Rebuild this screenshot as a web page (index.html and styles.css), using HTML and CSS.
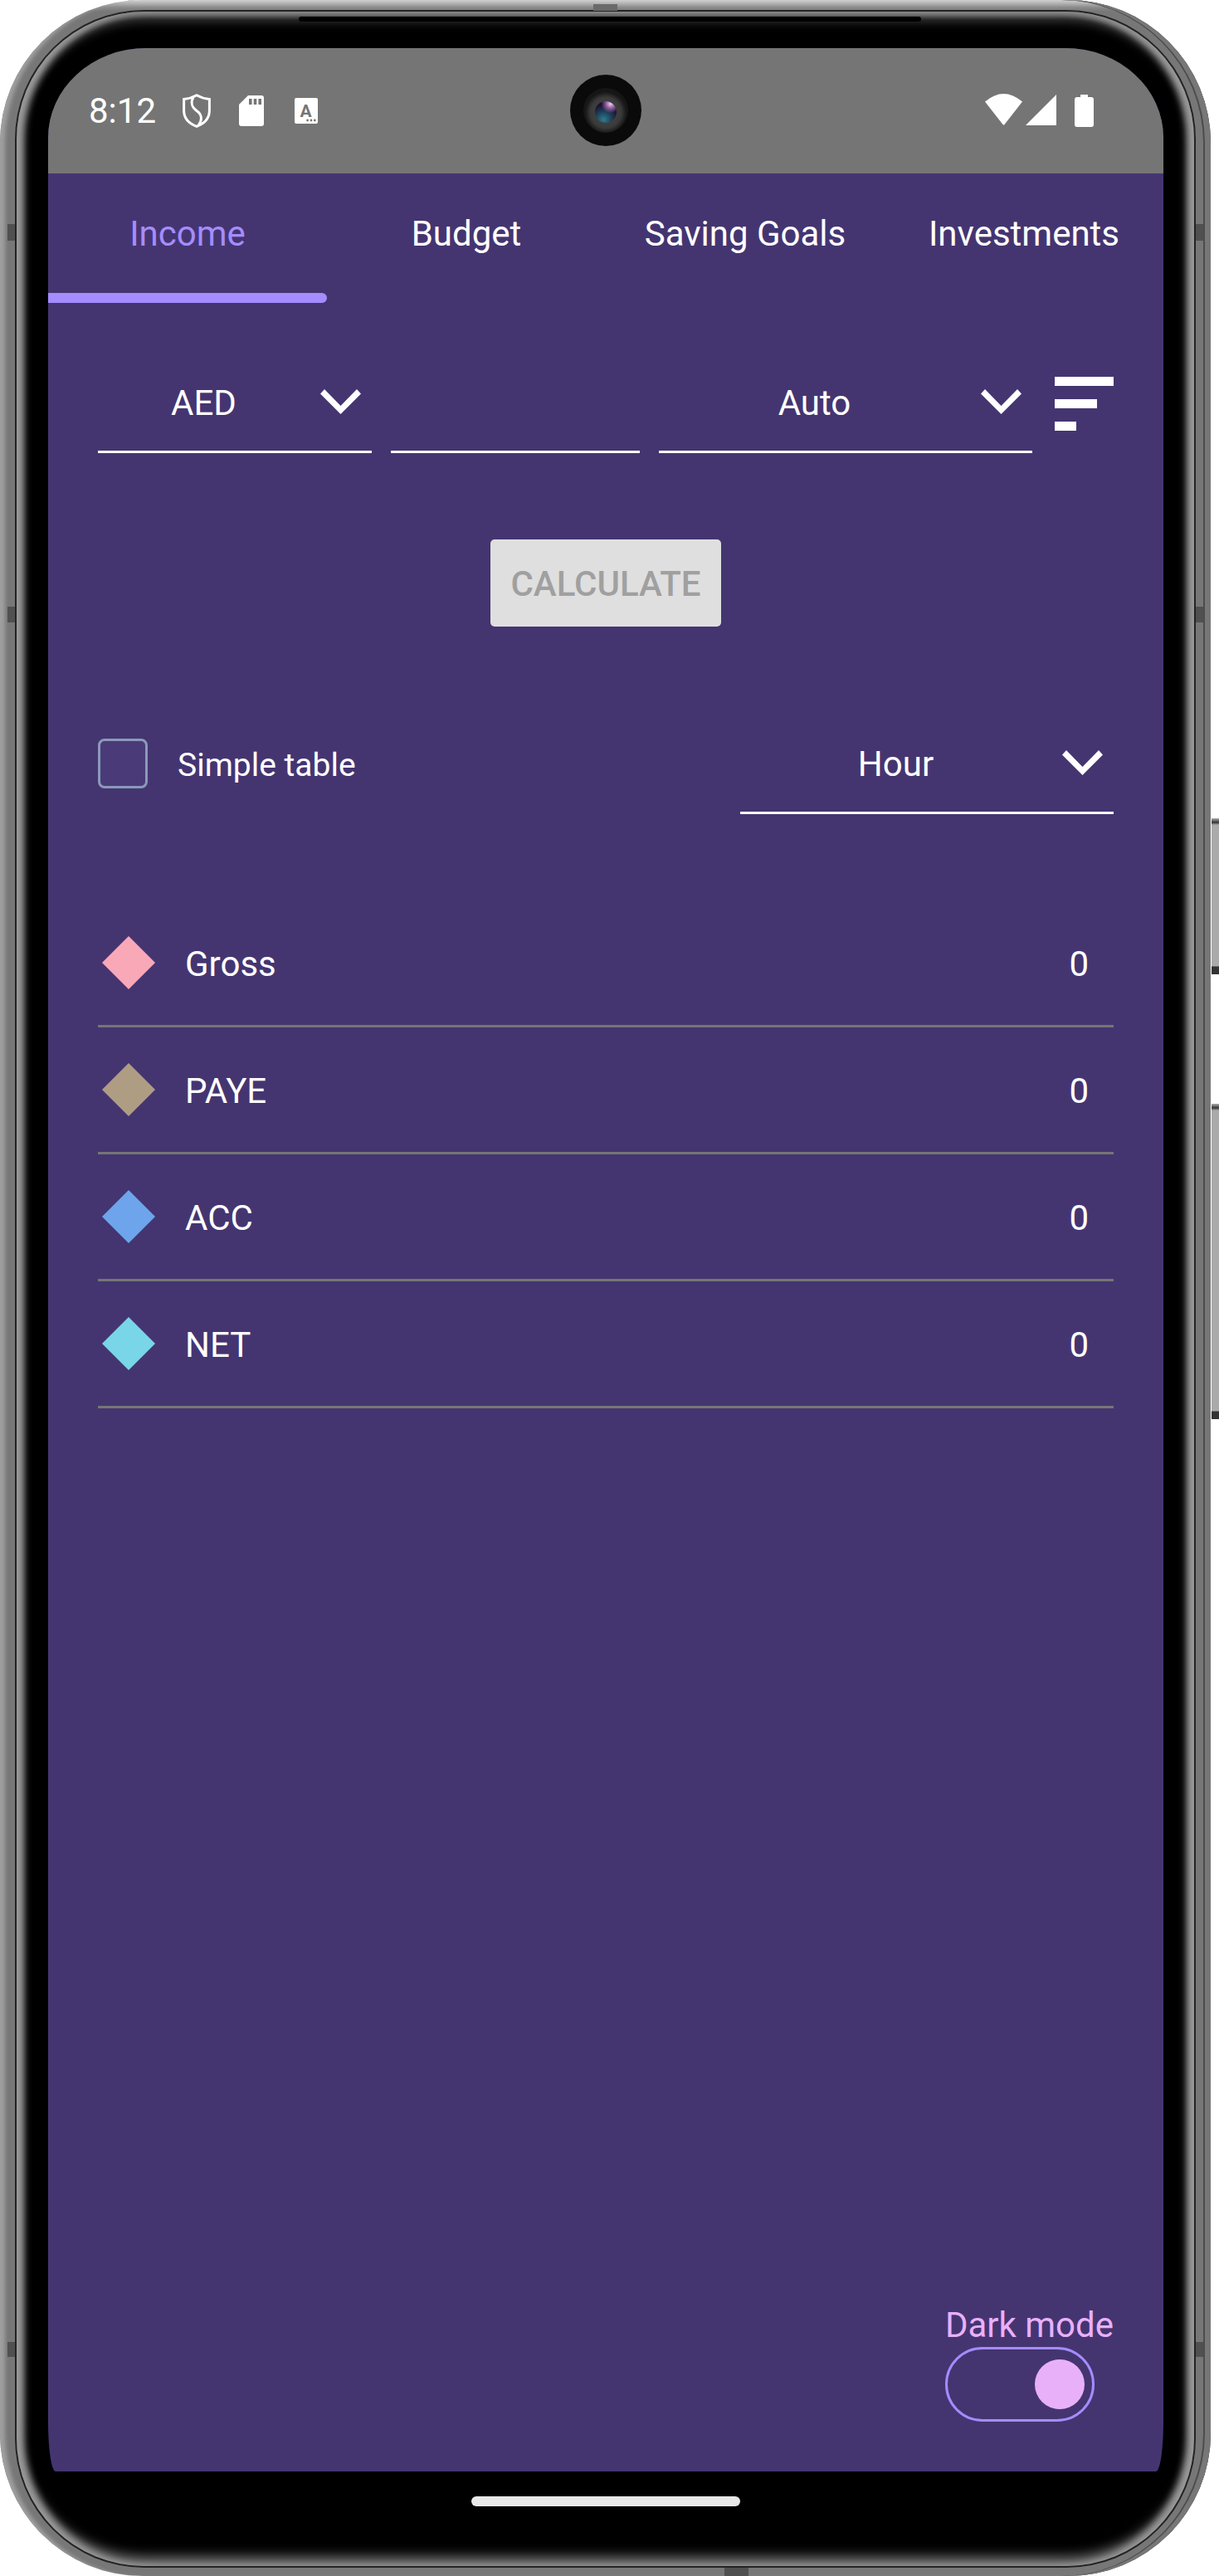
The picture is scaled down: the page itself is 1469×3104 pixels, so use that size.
FILE: index.html
```html
<!DOCTYPE html>
<html lang="en">
<head>
<meta charset="utf-8">
<title>Income</title>
<link rel="stylesheet" href="styles.css">
</head>
<body>
<div class="device">
  <span class="side-btn side-btn-a"></span>
  <span class="side-btn side-btn-b"></span>
  <span class="tick tick-l1"></span><span class="tick tick-l2"></span><span class="tick tick-l3"></span>
  <span class="tick tick-r1"></span><span class="tick tick-r2"></span><span class="tick tick-r3"></span>
  <span class="tick tick-top"></span><span class="tick tick-bottom"></span>
  <span class="notch"></span>
  <div class="shell">
    <div class="rim">
      <div class="bezel">
        <main class="screen">
          <header class="status">
            <div class="status-left">
              <span class="time">8:12</span>
              <svg class="ic-shield" viewBox="0 0 34 41" aria-hidden="true"><path class="stroke" d="M17 1.8C22 4.6 27 6 32.4 6.6V20C32.4 30 26 36 17 39.4 8 36 1.6 30 1.6 20V6.6C7 6 12 4.6 17 1.8Z"/><path class="stroke" d="M13 4C9 11 12 17 17 20.5 23 24.5 24.5 31 19 38"/></svg>
              <svg class="ic-sd" viewBox="0 0 30 37" aria-hidden="true"><path class="fill" d="M11 0H27a3 3 0 0 1 3 3V34a3 3 0 0 1-3 3H3a3 3 0 0 1-3-3V11Z"/><path class="hole" d="M12 4h3.6v7H12ZM17.7 4h3.6v7h-3.6ZM23.4 4H27v7h-3.6Z"/></svg>
              <svg class="ic-card" viewBox="0 0 28 31" aria-hidden="true"><rect class="fill" width="28" height="31" rx="2"/><text class="card-letter" x="13.5" y="22.5">A</text><circle class="hole" cx="15.6" cy="27" r="1.4"/><circle class="hole" cx="20" cy="27" r="1.4"/><circle class="hole" cx="24.3" cy="27" r="1.4"/></svg>
            </div>
            <div class="status-right">
              <svg class="ic-wifi" viewBox="0 0 45 38" aria-hidden="true"><path class="fill" d="M0 9.5Q22.5-9.5 45 9.5L23.5 37a1.3 1.3 0 0 1-2 0Z"/></svg>
              <svg class="ic-signal" viewBox="0 0 37 37" aria-hidden="true"><path class="fill" d="M37 0V37H0Z"/></svg>
              <svg class="ic-battery" viewBox="0 0 23 39" aria-hidden="true"><path class="fill" d="M7 0H16V3H20a3 3 0 0 1 3 3V36a3 3 0 0 1-3 3H3a3 3 0 0 1-3-3V6a3 3 0 0 1 3-3H7Z"/></svg>
            </div>
            <div class="camera"><div class="camera-ring"><div class="lens"></div></div></div>
          </header>

          <nav class="tabs">
            <a class="tab tab-active">Income</a>
            <a class="tab">Budget</a>
            <a class="tab">Saving Goals</a>
            <a class="tab">Investments</a>
          </nav>

          <section class="form-row">
            <div class="select select-currency">
              <span class="select-value">AED</span>
              <svg class="chevron" viewBox="0 0 49 30" aria-hidden="true"><polygon points="5,0 24.5,20 44,0 49,5.5 24.5,30 0,5.5"/></svg>
            </div>
            <div class="select select-amount"></div>
            <div class="select select-mode">
              <span class="select-value">Auto</span>
              <svg class="chevron" viewBox="0 0 49 30" aria-hidden="true"><polygon points="5,0 24.5,20 44,0 49,5.5 24.5,30 0,5.5"/></svg>
            </div>
            <div class="filter" aria-hidden="true">
              <span class="filter-bar filter-bar-l"></span>
              <span class="filter-bar filter-bar-m"></span>
              <span class="filter-bar filter-bar-s"></span>
            </div>
          </section>

          <div class="action">
            <button class="calculate" disabled>CALCULATE</button>
          </div>

          <section class="options">
            <label class="simple">
              <span class="checkbox"></span>
              <span class="simple-label">Simple table</span>
            </label>
            <div class="select select-period">
              <span class="select-value">Hour</span>
              <svg class="chevron" viewBox="0 0 49 30" aria-hidden="true"><polygon points="5,0 24.5,20 44,0 49,5.5 24.5,30 0,5.5"/></svg>
            </div>
          </section>

          <section class="list">
            <div class="row"><span class="diamond d-gross"></span><span class="row-name">Gross</span><span class="row-value">0</span></div>
            <div class="row"><span class="diamond d-paye"></span><span class="row-name">PAYE</span><span class="row-value">0</span></div>
            <div class="row"><span class="diamond d-acc"></span><span class="row-name">ACC</span><span class="row-value">0</span></div>
            <div class="row"><span class="diamond d-net"></span><span class="row-name">NET</span><span class="row-value">0</span></div>
          </section>

          <div class="dark-mode">
            <span class="dark-label">Dark mode</span>
            <span class="toggle"><span class="knob"></span></span>
          </div>
        </main>
        <div class="home-bar"></div>
      </div>
    </div>
  </div>
</div>
</body>
</html>
```

FILE: styles.css
```css
* { box-sizing: border-box; }
html, body { margin: 0; padding: 0; background: #fff; }
body { font-family: Roboto, "Liberation Sans", sans-serif; color: #fff; }

.device { position: relative; width: 1469px; height: 3104px; }

.shell {
  width: 1459px;
  height: 3104px;
  padding: 12px 18px 10px;
  border-radius: 172px;
  background: linear-gradient(#d4d4d4 0, #8a8a8a 9px, #777 14px, #777 100%);
  box-shadow: inset 9px 0 5px -3px #a0a0a0, inset -7px 0 0 #777, inset -9px 0 0 #4c4c4c;
}
.rim {
  height: 100%;
  padding: 2px;
  border-radius: 156px;
  background: #232323;
}
.bezel {
  height: 100%;
  display: flex;
  flex-direction: column;
  align-items: flex-start;
  padding: 44px 37px 72px 38px;
  border-radius: 154px;
  background: #000;
  box-shadow: inset 9px 0 8px 0 #9a9a9a, inset -9px 0 8px 0 #9a9a9a, inset 0 6px 4px 0 #5d5d5d, inset 0 12px 12px 0 #3a3a3a, inset 0 -12px 14px 0 #6a6a6a;
}
.notch { position: absolute; left: 360px; top: 20px; width: 750px; height: 6px; background: #000; border-radius: 3px; }

.side-btn {
  position: absolute;
  left: 1460px;
  width: 9px;
  background: linear-gradient(#b0b0b0 0, #333 5px, #aaa 8px, #aaa calc(100% - 10px), #333 calc(100% - 9px), #333 100%);
}
.side-btn-a { top: 986px; height: 188px; }
.side-btn-b { top: 1330px; height: 380px; }

.tick { position: absolute; background: #505050; }
.tick-l1, .tick-l2, .tick-l3 { left: 9px; width: 9px; }
.tick-r1, .tick-r2, .tick-r3 { left: 1441px; width: 9px; }
.tick-l1, .tick-r1 { top: 270px; height: 20px; }
.tick-l2, .tick-r2 { top: 731px; height: 19px; }
.tick-l3, .tick-r3 { top: 2822px; height: 18px; }
.tick-top { left: 715px; top: 5px; width: 29px; height: 8px; background: #6a6a6a; }
.tick-bottom { left: 873px; top: 3094px; width: 29px; height: 10px; }

.screen {
  flex: 1;
  width: 1344px;
  display: flex;
  flex-direction: column;
  overflow: hidden;
  background: #443571;
  border-radius: 118px 118px 9px 9px / 108px 108px 60px 60px;
}

.status {
  position: relative;
  flex: none;
  height: 151px;
  padding: 0 84px 0 49px;
  display: flex;
  align-items: center;
  justify-content: space-between;
  background: #757575;
}
.status-left, .status-right { display: flex; align-items: center; }
.time { width: 113px; font-size: 42px; line-height: 48px; }
.status svg { display: block; flex: none; }
.fill { fill: #fff; }
.hole { fill: #757575; }
.stroke { fill: none; stroke: #fff; stroke-width: 3; }
.ic-shield { width: 34px; height: 41px; margin-right: 34px; }
.ic-sd { width: 30px; height: 37px; margin-right: 37px; }
.ic-card { width: 28px; height: 31px; }
.card-letter { font-family: Roboto, sans-serif; font-size: 21px; font-weight: 700; fill: #757575; text-anchor: middle; }
.ic-wifi { width: 45px; height: 38px; margin-right: 4px; margin-top: -3px; }
.ic-signal { width: 37px; height: 37px; margin-right: 22px; margin-top: -2px; }
.ic-battery { width: 23px; height: 39px; }

.camera {
  position: absolute;
  left: 629px;
  top: 32px;
  width: 86px;
  height: 86px;
  display: flex;
  align-items: center;
  justify-content: center;
  border-radius: 50%;
  background: #0a0a0a;
}
.camera-ring {
  width: 54px;
  height: 54px;
  display: flex;
  align-items: center;
  justify-content: center;
  border-radius: 50%;
  background: radial-gradient(circle at 50% 55%, #4a4a4a 0, #3a3a3a 46%, #161616 62%, #141414 92%, #050505 100%);
}
.lens {
  width: 26px;
  height: 26px;
  margin-top: 4px;
  border-radius: 50%;
  background: radial-gradient(circle at 72% 12%, #f0cdf0 0, #8e5f9c 18%, transparent 38%), radial-gradient(circle at 40% 85%, #2f7c8e 0, #1d3f58 36%, transparent 66%), #1c1030;
}

.tabs { flex: none; display: flex; height: 156px; }
.tab {
  flex: 1;
  height: 156px;
  padding-bottom: 12px;
  display: flex;
  align-items: center;
  justify-content: center;
  font-size: 42px;
  color: #fff;
}
.tab-active {
  color: #a58cff;
  position: relative;
}
.tab-active::after {
  content: "";
  position: absolute;
  left: 0;
  right: 0;
  bottom: 0;
  height: 12px;
  border-radius: 0 6px 6px 0;
  background: #a58cff;
}

.form-row { flex: none; display: flex; margin-top: 62px; padding: 0 60px; }
.select {
  display: flex;
  align-items: center;
  gap: 13px;
  height: 119px;
  padding-right: 13px;
  border-bottom: 3px solid #fff;
}
.select-currency { width: 330px; }
.select-amount { width: 300px; margin-left: 23px; }
.select-mode { width: 450px; margin-left: 23px; }
.select-period { width: 450px; }
.select-value { flex: 1; text-align: center; font-size: 42px; line-height: 48px; margin-top: 1px; }
.chevron { flex: none; width: 49px; height: 30px; fill: #fff; margin-top: -2px; }

.filter { width: 71px; margin: 27px 0 0 27px; display: flex; flex-direction: column; gap: 16px; }
.filter-bar { display: block; height: 11px; background: #fff; }
.filter-bar-l { width: 71px; }
.filter-bar-m { width: 51px; }
.filter-bar-s { width: 26px; }

.action { flex: none; display: flex; justify-content: center; margin-top: 104px; }
.calculate {
  width: 278px;
  height: 105px;
  padding: 2px 0 0;
  border: 0;
  border-radius: 5px;
  background: #dfdfdf;
  color: #a0a0a0;
  font-family: Roboto, sans-serif;
  font-size: 42px;
  font-weight: 500;
}

.options {
  flex: none;
  display: flex;
  align-items: center;
  justify-content: space-between;
  margin-top: 107px;
  padding: 0 60px;
}
.simple { display: flex; align-items: center; gap: 36px; margin-bottom: 3px; }
.checkbox {
  width: 60px;
  height: 60px;
  border: 3px solid #8c98b8;
  border-radius: 8px;
  background: #4a3b78;
}
.simple-label { font-size: 39px; line-height: 48px; margin-top: 3px; }

.list { flex: none; margin: 104px 60px 0; }
.row {
  height: 153px;
  padding: 0 30px 0 5px;
  display: flex;
  align-items: center;
  border-bottom: 3px solid #757575;
}
.diamond { flex: none; width: 64px; height: 64px; margin-right: 36px; clip-path: polygon(50% 0, 100% 50%, 50% 100%, 0 50%); }
.d-gross { background: #f9a8b8; }
.d-paye { background: #ae9d82; }
.d-acc { background: #6ea4ec; }
.d-net { background: #78d6e8; }
.row-name { flex: 1; font-size: 42px; line-height: 48px; margin-top: 4px; }
.row-value { font-size: 42px; line-height: 48px; margin-top: 4px; }

.dark-mode {
  margin: auto 60px 60px auto;
  display: flex;
  flex-direction: column;
  align-items: flex-start;
}
.dark-label { font-size: 42px; line-height: 48px; color: #e9b0fa; margin-bottom: 2px; }
.toggle {
  width: 180px;
  height: 90px;
  padding-right: 9px;
  display: flex;
  align-items: center;
  justify-content: flex-end;
  border: 3px solid #a58cff;
  border-radius: 45px;
}
.knob { width: 60px; height: 60px; border-radius: 50%; background: #e9b0fa; }

.home-bar {
  flex: none;
  width: 324px;
  height: 12px;
  margin: 30px 0 0 510px;
  border-radius: 6px;
  background: #e8e8e8;
}
```
